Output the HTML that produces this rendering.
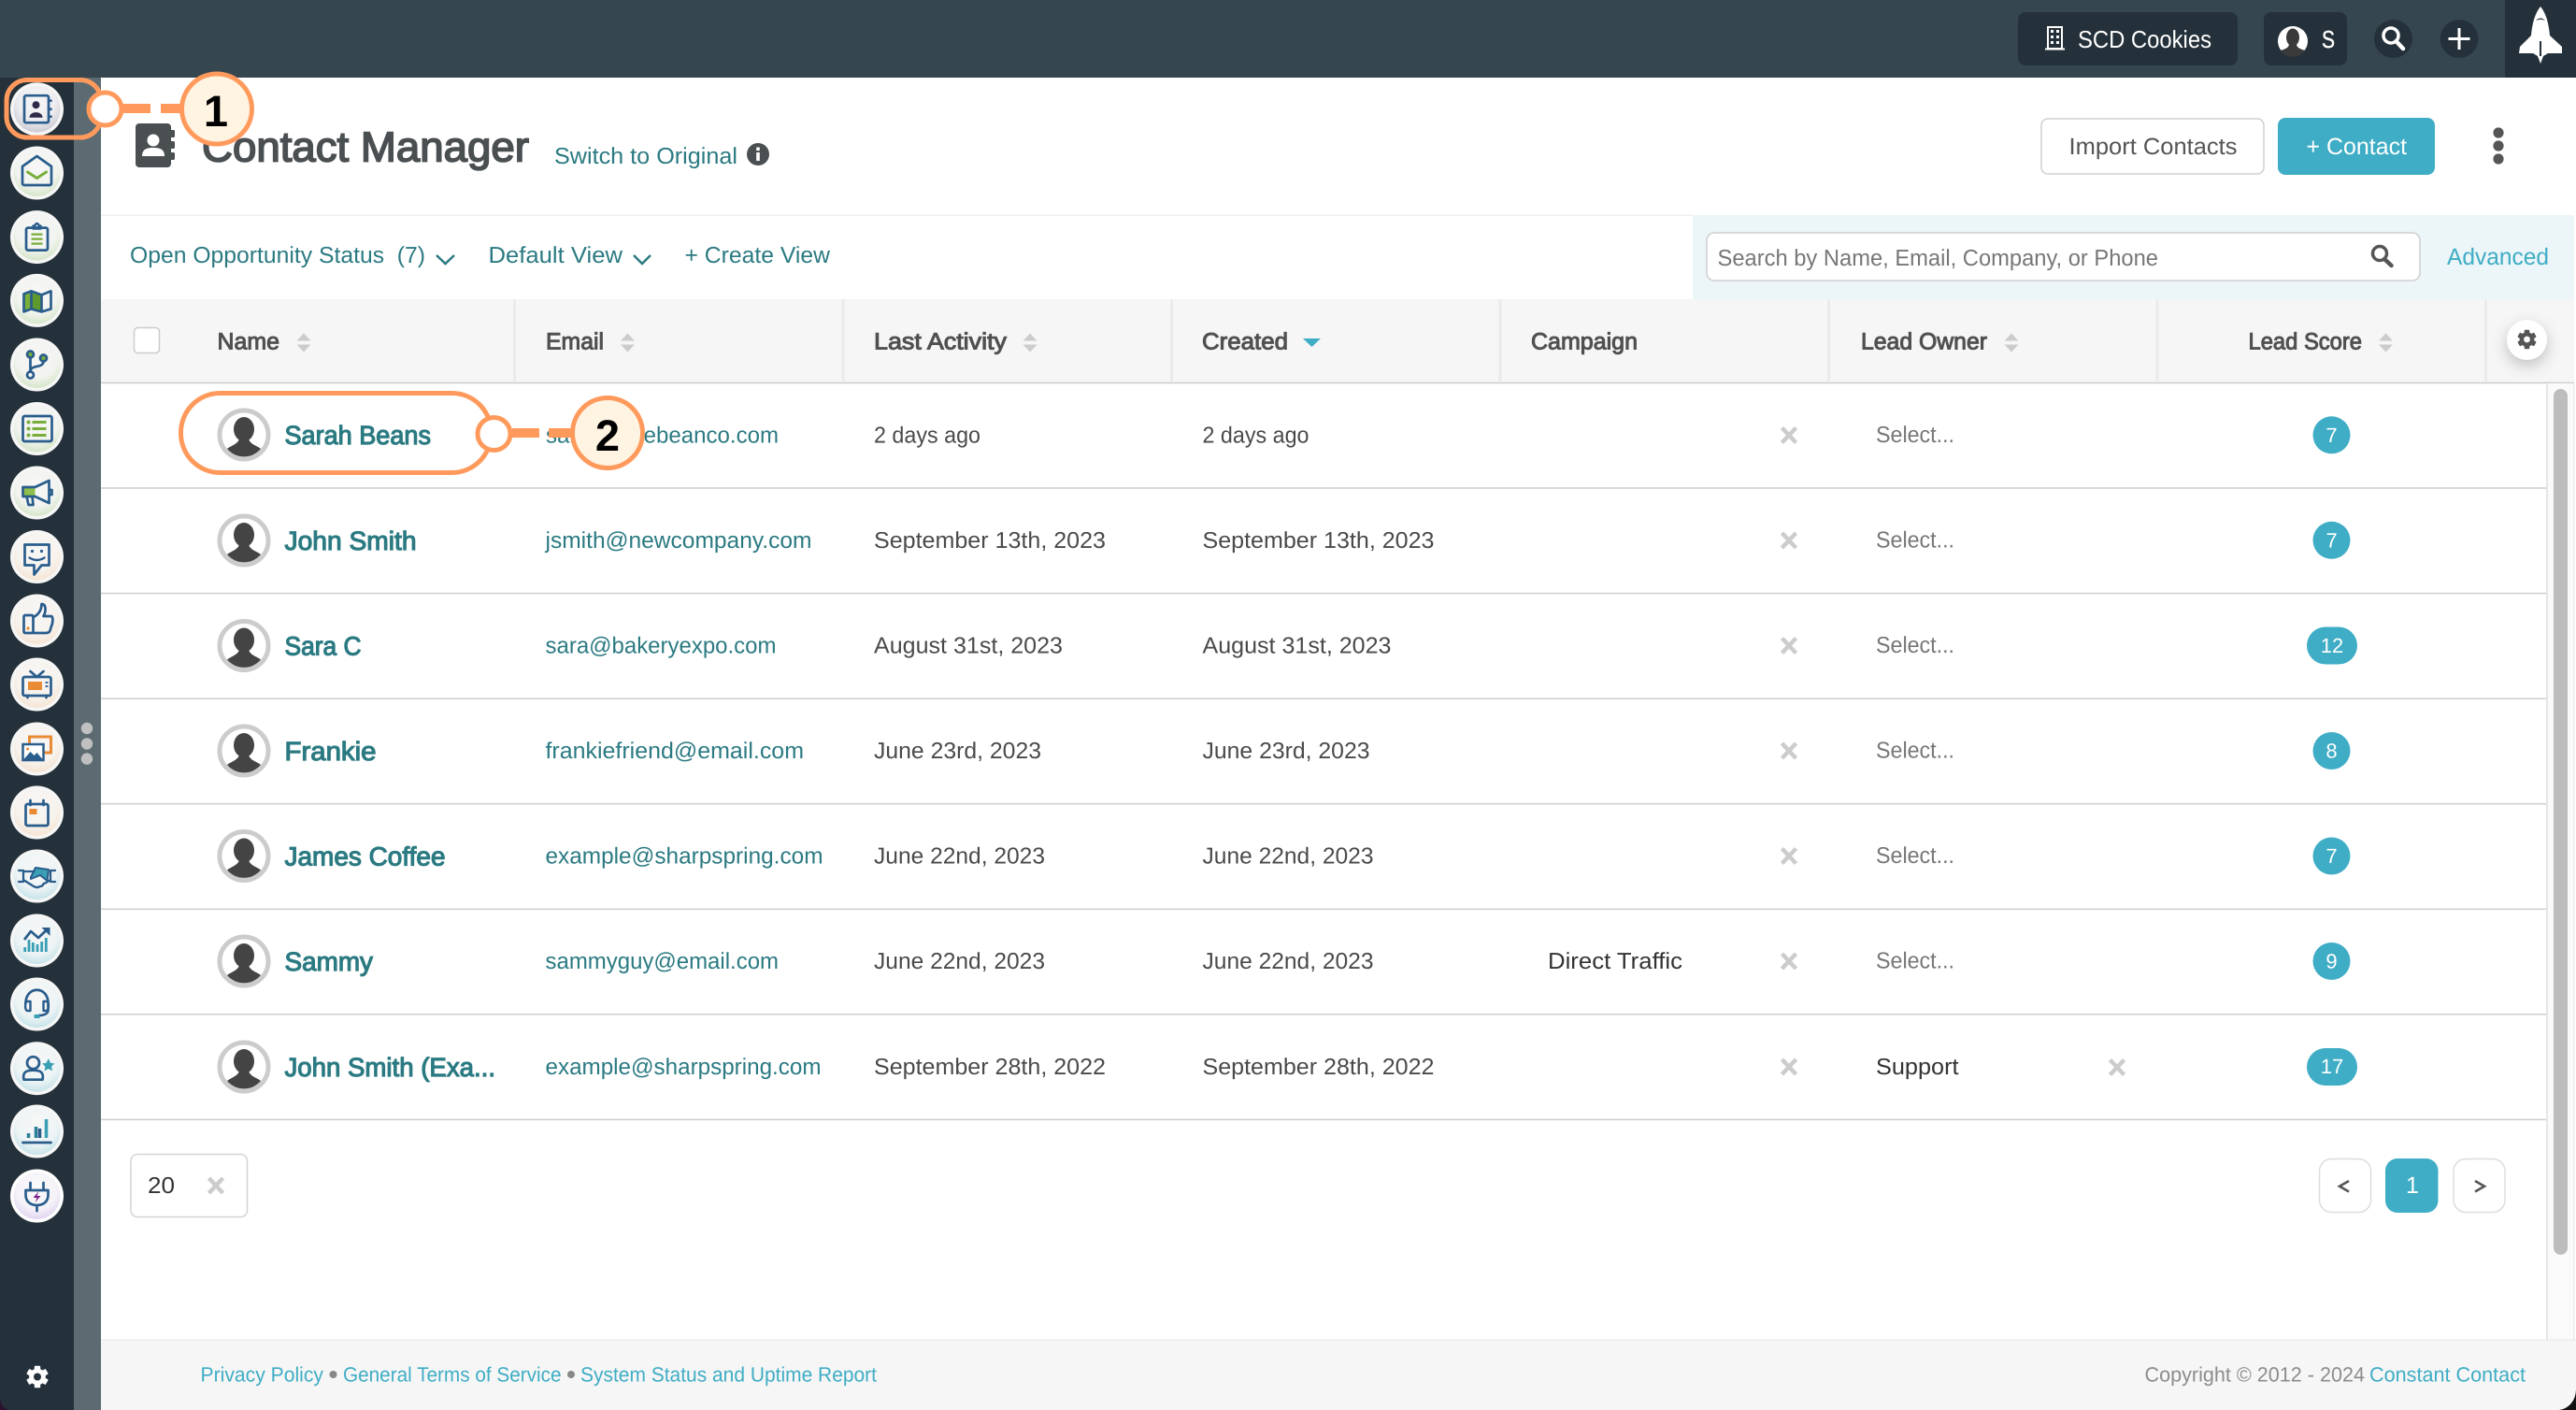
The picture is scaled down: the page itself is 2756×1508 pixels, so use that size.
<!DOCTYPE html>
<html lang="en"><head><meta charset="utf-8"><title>Contact Manager</title>
<style>
html,body{margin:0;padding:0;width:2756px;height:1508px;overflow:hidden;background:#fff}
svg{display:block;font-family:"Liberation Sans",sans-serif;text-rendering:geometricPrecision}
.nm{font-size:28px;fill:#2b7a82;stroke:#2b7a82;stroke-width:1.15px}
.em{font-size:24.5px;fill:#2b7a82}
.dt{font-size:24.5px;fill:#4a4a4a}
.se{font-size:24.5px;fill:#777}
.th{font-size:25px;fill:#505050;stroke:#505050;stroke-width:1px}
.tl{font-size:24.5px;fill:#2b7a82}
.ft{font-size:22px;fill:#3fadc5}
.bd{font-size:22px;fill:#fff;text-anchor:middle}
.b{fill:none;stroke:#2a5d8c;stroke-width:2.7;stroke-linejoin:round;stroke-linecap:round}
.g{fill:none;stroke:#79ad3a;stroke-width:3;stroke-linecap:round}
.o{fill:none;stroke:#e98a35;stroke-width:3;stroke-linecap:round}
.t{fill:none;stroke:#3a9fb5;stroke-width:3;stroke-linecap:butt}
</style></head><body>
<svg xmlns="http://www.w3.org/2000/svg" width="2756" height="1508" viewBox="0 0 2756 1508">
<defs>
<radialGradient id="dk" cx=".5" cy=".35" r=".72"><stop offset="0" stop-color="#f6f6f7"/><stop offset=".55" stop-color="#ededf0"/><stop offset="1" stop-color="#c4c2cc"/></radialGradient>
<radialGradient id="dg" cx=".5" cy=".35" r=".72"><stop offset="0" stop-color="#f7f7f7"/><stop offset=".6" stop-color="#f2f4f0"/><stop offset="1" stop-color="#cde2bd"/></radialGradient>
<radialGradient id="do" cx=".5" cy=".35" r=".72"><stop offset="0" stop-color="#f7f7f7"/><stop offset=".6" stop-color="#f7f3ee"/><stop offset="1" stop-color="#f5e0ca"/></radialGradient>
<radialGradient id="dt" cx=".5" cy=".35" r=".72"><stop offset="0" stop-color="#f7f7f7"/><stop offset=".6" stop-color="#eef4f5"/><stop offset="1" stop-color="#b9dee6"/></radialGradient>
<radialGradient id="dp" cx=".5" cy=".35" r=".72"><stop offset="0" stop-color="#fafafa"/><stop offset=".6" stop-color="#f5f2f8"/><stop offset="1" stop-color="#dccdf0"/></radialGradient>
<symbol id="av" overflow="visible" viewBox="-30 -30 60 60" width="60" height="60">
<circle r="26" fill="#fff" stroke="#ccc" stroke-width="5"/>
<ellipse cx="0" cy="-6" rx="11" ry="13" fill="#444"/>
<path d="M-5,3 C-5,10 -15,12 -18,15 A23.5 23.5 0 0 0 18,15 C15,12 5,10 5,3Z" fill="#444"/>
</symbol>
<symbol id="x" overflow="visible" viewBox="-12 -12 24 24" width="24" height="24">
<path d="M-7.5,-8 L7.5,8 M7.5,-8 L-7.5,8" stroke="#ccc" stroke-width="4.5" fill="none"/>
</symbol>
<symbol id="so" overflow="visible" viewBox="-10 -12 20 24" width="20" height="24">
<path d="M-7.5,-2 L0,-10 L7.5,-2Z M-7.5,2 L0,10 L7.5,2Z" fill="#ccc"/>
</symbol>
</defs>

<!-- background -->
<rect width="2756" height="1508" fill="#fff"/>
<rect width="2756" height="83" fill="#36464f"/>
<rect x="0" y="83" width="79" height="1425" fill="#25313a"/>
<rect x="79" y="83" width="29" height="1425" fill="#5c6b72"/>
<circle cx="93" cy="779" r="6.2" fill="#c0c0c0"/><circle cx="93" cy="795.5" r="6.2" fill="#c0c0c0"/><circle cx="93" cy="811.6" r="6.2" fill="#c0c0c0"/>

<!-- top bar -->
<rect x="2159" y="13" width="235" height="57" rx="8" fill="#25313a"/>
<g fill="none" stroke="#fff" stroke-width="2"><rect x="2191" y="29" width="15" height="23"/><path d="M2188,52.5H2209"/></g>
<g fill="#fff"><rect x="2194" y="32" width="3" height="3"/><rect x="2200" y="32" width="3" height="3"/><rect x="2194" y="38" width="3" height="3"/><rect x="2200" y="38" width="3" height="3"/><rect x="2194" y="44" width="3" height="3"/><rect x="2200" y="44" width="3" height="3"/></g>
<text x="2223" y="51" font-size="26" fill="#fff" textLength="143" lengthAdjust="spacingAndGlyphs">SCD Cookies</text>
<rect x="2422" y="13" width="89" height="57" rx="8" fill="#25313a"/>
<circle cx="2453" cy="44" r="16" fill="#fff"/>
<ellipse cx="2453" cy="40" rx="7" ry="9.5" fill="#3a3a3a"/>
<path d="M2449,47 C2449,52 2442,53 2440,54 A16 16 0 0 0 2466,54 C2464,53 2457,52 2457,47Z" fill="#3a3a3a"/>
<text x="2484" y="51" font-size="26" fill="#fff" stroke="#fff" stroke-width=".4" textLength="14" lengthAdjust="spacingAndGlyphs">S</text>
<circle cx="2560.5" cy="41.5" r="20.5" fill="#25313a"/>
<circle cx="2558" cy="38" r="8" fill="none" stroke="#fff" stroke-width="3.5"/>
<path d="M2563.5,44 L2571,52" stroke="#fff" stroke-width="4.5" stroke-linecap="round"/>
<circle cx="2631" cy="41.5" r="20.5" fill="#25313a"/>
<path d="M2619.5,41.5 H2642.5 M2631,30 V53" stroke="#fff" stroke-width="3" fill="none"/>
<rect x="2680" y="0" width="76" height="83" fill="#25313a"/>
<path d="M2718,7 C2712,14 2709,26 2708,38 L2696,50 L2695,57 L2710,57 L2715,60 L2718,68 L2721,60 L2726,57 L2741,57 L2741,50 L2728,38 C2727,26 2724,14 2718,7Z" fill="#fff"/>
<path d="M2713,22 Q2718,17 2723,22 Q2718,19.5 2713,22Z M2717,44 H2719 V60 H2717Z" fill="#25313a"/>

<!-- page header -->
<rect x="145" y="132" width="38" height="47" rx="4" fill="#4a4f52"/>
<rect x="182" y="139" width="5" height="8" rx="1.5" fill="#4a4f52"/><rect x="182" y="151" width="5" height="8" rx="1.5" fill="#4a4f52"/><rect x="182" y="163" width="5" height="8" rx="1.5" fill="#4a4f52"/>
<circle cx="164" cy="150" r="6.5" fill="#fff"/><path d="M152,167 C152,159 158,158 164,158 C170,158 176,159 176,167Z" fill="#fff"/>
<text x="216" y="172.5" font-size="45" fill="#4a4f52" stroke="#4a4f52" stroke-width="1.7" textLength="350" lengthAdjust="spacingAndGlyphs">Contact Manager</text>
<text x="593" y="175" class="tl" font-size="25" textLength="196" lengthAdjust="spacingAndGlyphs">Switch to Original</text>
<circle cx="811" cy="165" r="12" fill="#4a4f52"/><rect x="809.2" y="163" width="3.6" height="9" fill="#fff"/><rect x="809.2" y="157.5" width="3.6" height="3.6" fill="#fff"/>
<rect x="2184" y="127" width="238" height="59" rx="7" fill="#fff" stroke="#d2d2d2" stroke-width="1.6"/>
<text x="2213.5" y="165" font-size="25" fill="#555" textLength="180" lengthAdjust="spacingAndGlyphs">Import Contacts</text>
<rect x="2437" y="126" width="168" height="61" rx="8" fill="#3fadc5"/>
<text x="2467.5" y="165" font-size="25" fill="#fff" textLength="107.5" lengthAdjust="spacingAndGlyphs">+ Contact</text>
<circle cx="2673" cy="142" r="5.6" fill="#555"/><circle cx="2673" cy="156" r="5.6" fill="#555"/><circle cx="2673" cy="170" r="5.6" fill="#555"/>

<!-- toolbar -->
<rect x="108" y="229.5" width="1703" height="1.5" fill="#f0f0f0"/>
<rect x="1811" y="230" width="943" height="90" fill="#ecf5f8"/>
<text x="139" y="281" class="tl" textLength="316" lengthAdjust="spacingAndGlyphs" xml:space="preserve">Open Opportunity Status  (7)</text>
<path d="M467,273 L476.5,282 L486,273" fill="none" stroke="#2b7a82" stroke-width="2.5"/>
<text x="522.5" y="281" class="tl" textLength="143.5" lengthAdjust="spacingAndGlyphs">Default View</text>
<path d="M678,273 L687,282 L696,273" fill="none" stroke="#2b7a82" stroke-width="2.5"/>
<text x="732.5" y="281" class="tl" textLength="155.5" lengthAdjust="spacingAndGlyphs">+ Create View</text>
<rect x="1826" y="249" width="763" height="51" rx="8" fill="#fff" stroke="#d0d0d0" stroke-width="1.6"/>
<text x="1837.5" y="284" class="se" textLength="471.5" lengthAdjust="spacingAndGlyphs">Search by Name, Email, Company, or Phone</text>
<circle cx="2546" cy="271" r="7.5" fill="none" stroke="#555" stroke-width="3.5"/>
<path d="M2551,277 L2558.5,284" stroke="#555" stroke-width="4.5" stroke-linecap="round"/>
<text x="2618" y="283" font-size="25" fill="#3fadc5" textLength="109" lengthAdjust="spacingAndGlyphs">Advanced</text>

<!-- table header -->
<rect x="108" y="320" width="2646" height="89" fill="#f6f6f6"/>
<rect x="108" y="408.7" width="2646" height="1.6" fill="#cfcfcf"/>
<g fill="#ebebeb"><rect x="549" y="320" width="3" height="89"/><rect x="900.5" y="320" width="3" height="89"/><rect x="1252" y="320" width="3" height="89"/><rect x="1603.5" y="320" width="3" height="89"/><rect x="1955" y="320" width="3" height="89"/><rect x="2306.5" y="320" width="3" height="89"/><rect x="2658" y="320" width="3" height="89"/></g>
<rect x="143.5" y="350.5" width="27" height="27" rx="4" fill="#fff" stroke="#ccc" stroke-width="1.5"/>
<text x="232.5" y="373.5" class="th" textLength="66.5" lengthAdjust="spacingAndGlyphs">Name</text>
<use href="#so" x="315" y="354.5"/>
<text x="584" y="373.5" class="th" textLength="62" lengthAdjust="spacingAndGlyphs">Email</text>
<use href="#so" x="661.5" y="354.5"/>
<text x="935" y="373.5" class="th" textLength="142" lengthAdjust="spacingAndGlyphs">Last Activity</text>
<use href="#so" x="1092" y="354.5"/>
<text x="1286" y="373.5" class="th" textLength="92" lengthAdjust="spacingAndGlyphs">Created</text>
<path d="M1394,362 H1413 L1403.5,371Z" fill="#3fadc5"/>
<text x="1638" y="373.5" class="th" textLength="114" lengthAdjust="spacingAndGlyphs">Campaign</text>
<text x="1991" y="373.5" class="th" textLength="135" lengthAdjust="spacingAndGlyphs">Lead Owner</text>
<use href="#so" x="2142" y="354.5"/>
<text x="2405.5" y="373.5" class="th" textLength="121.5" lengthAdjust="spacingAndGlyphs">Lead Score</text>
<use href="#so" x="2542.5" y="354.5"/>
<g style="filter:drop-shadow(0 6px 8px rgba(0,0,0,.22))"><circle cx="2703.5" cy="363.5" r="21.5" fill="#fff"/></g>
<g transform="translate(2703.5,363)" fill="#555"><circle r="7.8"/><rect x="-2.8" y="-10.2" width="5.6" height="20.4" rx="1"/><rect x="-2.8" y="-10.2" width="5.6" height="20.4" rx="1" transform="rotate(60)"/><rect x="-2.8" y="-10.2" width="5.6" height="20.4" rx="1" transform="rotate(120)"/><circle r="3.4" fill="#fff"/></g>

<!-- scroll track -->
<rect x="2725" y="410" width="29" height="1023" fill="#fafafa"/>
<rect x="2724" y="410" width="2" height="1023" fill="#e6e6e6"/>
<rect x="2753" y="410" width="1.5" height="1023" fill="#ececec"/>
<rect x="2732" y="416" width="15" height="926" rx="7.5" fill="#bdbdbd"/>

<!-- row lines -->
<g fill="#d0d0d0"><rect x="108" y="521.2" width="2616" height="1.6"/><rect x="108" y="633.8" width="2616" height="1.6"/><rect x="108" y="746.4" width="2616" height="1.6"/><rect x="108" y="858.9" width="2616" height="1.6"/><rect x="108" y="971.5" width="2616" height="1.6"/><rect x="108" y="1084" width="2616" height="1.6"/><rect x="108" y="1196.6" width="2616" height="1.6"/></g>

<!-- row 1 -->
<use href="#av" x="231" y="435"/>
<text x="304.5" y="475" class="nm" textLength="156.5" lengthAdjust="spacingAndGlyphs">Sarah Beans</text>
<text x="584" y="473.5" class="em" textLength="249" lengthAdjust="spacingAndGlyphs">sarah@thebeanco.com</text>
<text x="935" y="473.5" class="dt" textLength="114" lengthAdjust="spacingAndGlyphs">2 days ago</text>
<text x="1286.5" y="473.5" class="dt" textLength="114" lengthAdjust="spacingAndGlyphs">2 days ago</text>
<use href="#x" x="1902" y="453.5"/>
<text x="2007" y="473" class="se" textLength="84" lengthAdjust="spacingAndGlyphs">Select...</text>
<circle cx="2494.5" cy="465.3" r="20" fill="#3fadc5"/><text x="2494.5" y="473" class="bd">7</text>

<!-- row 2 -->
<use href="#av" x="231" y="548"/>
<text x="304.5" y="588" class="nm" textLength="141" lengthAdjust="spacingAndGlyphs">John Smith</text>
<text x="583.5" y="586" class="em" textLength="285" lengthAdjust="spacingAndGlyphs">jsmith@newcompany.com</text>
<text x="935" y="586" class="dt" textLength="248" lengthAdjust="spacingAndGlyphs">September 13th, 2023</text>
<text x="1286.5" y="586" class="dt" textLength="248" lengthAdjust="spacingAndGlyphs">September 13th, 2023</text>
<use href="#x" x="1902" y="566"/>
<text x="2007" y="585.5" class="se" textLength="84" lengthAdjust="spacingAndGlyphs">Select...</text>
<circle cx="2494.5" cy="577.8" r="20" fill="#3fadc5"/><text x="2494.5" y="585.5" class="bd">7</text>

<!-- row 3 -->
<use href="#av" x="231" y="660.5"/>
<text x="304.5" y="700.5" class="nm" textLength="82" lengthAdjust="spacingAndGlyphs">Sara C</text>
<text x="583.5" y="698.5" class="em" textLength="247" lengthAdjust="spacingAndGlyphs">sara@bakeryexpo.com</text>
<text x="935" y="698.5" class="dt" textLength="202" lengthAdjust="spacingAndGlyphs">August 31st, 2023</text>
<text x="1286.5" y="698.5" class="dt" textLength="202" lengthAdjust="spacingAndGlyphs">August 31st, 2023</text>
<use href="#x" x="1902" y="678.5"/>
<text x="2007" y="698" class="se" textLength="84" lengthAdjust="spacingAndGlyphs">Select...</text>
<rect x="2468" y="670.5" width="54" height="40" rx="20" fill="#3fadc5"/><text x="2495" y="698" class="bd">12</text>

<!-- row 4 -->
<use href="#av" x="231" y="773"/>
<text x="304.5" y="813" class="nm" textLength="98" lengthAdjust="spacingAndGlyphs">Frankie</text>
<text x="583.5" y="811" class="em" textLength="276.5" lengthAdjust="spacingAndGlyphs">frankiefriend@email.com</text>
<text x="935" y="811" class="dt" textLength="179" lengthAdjust="spacingAndGlyphs">June 23rd, 2023</text>
<text x="1286.5" y="811" class="dt" textLength="179" lengthAdjust="spacingAndGlyphs">June 23rd, 2023</text>
<use href="#x" x="1902" y="791"/>
<text x="2007" y="810.5" class="se" textLength="84" lengthAdjust="spacingAndGlyphs">Select...</text>
<circle cx="2494.5" cy="803" r="20" fill="#3fadc5"/><text x="2494.5" y="810.7" class="bd">8</text>

<!-- row 5 -->
<use href="#av" x="231" y="885.5"/>
<text x="304.5" y="925.5" class="nm" textLength="172" lengthAdjust="spacingAndGlyphs">James Coffee</text>
<text x="583.5" y="923.5" class="em" textLength="297" lengthAdjust="spacingAndGlyphs">example@sharpspring.com</text>
<text x="935" y="923.5" class="dt" textLength="183" lengthAdjust="spacingAndGlyphs">June 22nd, 2023</text>
<text x="1286.5" y="923.5" class="dt" textLength="183" lengthAdjust="spacingAndGlyphs">June 22nd, 2023</text>
<use href="#x" x="1902" y="903.5"/>
<text x="2007" y="923" class="se" textLength="84" lengthAdjust="spacingAndGlyphs">Select...</text>
<circle cx="2494.5" cy="915.5" r="20" fill="#3fadc5"/><text x="2494.5" y="923.2" class="bd">7</text>

<!-- row 6 -->
<use href="#av" x="231" y="998"/>
<text x="304.5" y="1038" class="nm" textLength="94.5" lengthAdjust="spacingAndGlyphs">Sammy</text>
<text x="583.5" y="1036" class="em" textLength="249.5" lengthAdjust="spacingAndGlyphs">sammyguy@email.com</text>
<text x="935" y="1036" class="dt" textLength="183" lengthAdjust="spacingAndGlyphs">June 22nd, 2023</text>
<text x="1286.5" y="1036" class="dt" textLength="183" lengthAdjust="spacingAndGlyphs">June 22nd, 2023</text>
<text x="1656" y="1036" font-size="24.5" fill="#333" textLength="144" lengthAdjust="spacingAndGlyphs">Direct Traffic</text>
<use href="#x" x="1902" y="1016"/>
<text x="2007" y="1035.5" class="se" textLength="84" lengthAdjust="spacingAndGlyphs">Select...</text>
<circle cx="2494.5" cy="1028" r="20" fill="#3fadc5"/><text x="2494.5" y="1035.7" class="bd">9</text>

<!-- row 7 -->
<use href="#av" x="231" y="1111"/>
<text x="304.5" y="1151" class="nm" textLength="225.5" lengthAdjust="spacingAndGlyphs">John Smith (Exa...</text>
<text x="583.5" y="1149" class="em" textLength="295" lengthAdjust="spacingAndGlyphs">example@sharpspring.com</text>
<text x="935" y="1149" class="dt" textLength="248" lengthAdjust="spacingAndGlyphs">September 28th, 2022</text>
<text x="1286.5" y="1149" class="dt" textLength="248" lengthAdjust="spacingAndGlyphs">September 28th, 2022</text>
<use href="#x" x="1902" y="1129"/>
<text x="2007" y="1149" font-size="24.5" fill="#333" textLength="88.5" lengthAdjust="spacingAndGlyphs">Support</text>
<use href="#x" x="2253" y="1129.5"/>
<rect x="2468" y="1121" width="54" height="40" rx="20" fill="#3fadc5"/><text x="2495" y="1148" class="bd">17</text>

<!-- pagination -->
<rect x="140" y="1234.5" width="124.5" height="67" rx="7" fill="#fff" stroke="#d4d4d4" stroke-width="1.5"/>
<text x="158" y="1276" font-size="24.5" fill="#333" textLength="29" lengthAdjust="spacingAndGlyphs">20</text>
<use href="#x" x="219" y="1256"/>
<rect x="2481.5" y="1239.5" width="55" height="57" rx="13" fill="#fff" stroke="#ddd" stroke-width="1.5"/>
<path d="M2513,1263 L2503,1268.7 L2513,1274.5" fill="none" stroke="#555" stroke-width="2.6"/>
<rect x="2552" y="1239" width="56.5" height="58" rx="13" fill="#3fadc5"/>
<text x="2581" y="1276" font-size="25" fill="#fff" text-anchor="middle">1</text>
<rect x="2625" y="1239.5" width="55" height="57" rx="13" fill="#fff" stroke="#ddd" stroke-width="1.5"/>
<path d="M2648,1263 L2658,1268.7 L2648,1274.5" fill="none" stroke="#555" stroke-width="2.6"/>

<!-- footer -->
<rect x="108" y="1433" width="2648" height="75" fill="#f6f6f6"/>
<rect x="108" y="1432.5" width="2648" height="1.5" fill="#ececec"/>
<text x="214.5" y="1477.5" class="ft" textLength="131.5" lengthAdjust="spacingAndGlyphs">Privacy Policy</text>
<circle cx="356.5" cy="1470" r="4" fill="#888"/>
<text x="367" y="1477.5" class="ft" textLength="233.5" lengthAdjust="spacingAndGlyphs">General Terms of Service</text>
<circle cx="611" cy="1470" r="4" fill="#888"/>
<text x="621" y="1477.5" class="ft" textLength="317" lengthAdjust="spacingAndGlyphs">System Status and Uptime Report</text>
<text x="2294.5" y="1477.5" font-size="22" fill="#8c8c8c" textLength="235.5" lengthAdjust="spacingAndGlyphs">Copyright © 2012 - 2024</text>
<text x="2535" y="1477.5" class="ft" textLength="167" lengthAdjust="spacingAndGlyphs">Constant Contact</text>
<path d="M2756,1486 A20 22 0 0 1 2738,1508 H2756Z" fill="#111"/>
<path d="M0,1494 A12 14 0 0 0 14,1508 H0Z" fill="#2a1230"/>

<!-- sidebar icons -->
<g>
<circle cx="39.5" cy="116.7" r="28.5" fill="#f6f6f6"/><circle cx="39.5" cy="116.7" r="25" fill="url(#dk)"/>
<g transform="translate(39.5,116.7)"><rect x="-13.5" y="-14.5" width="26" height="29" rx="2" class="b"/><path d="M13,-9 h2 M13,0 h2 M13,8 h2" class="b"/><circle cx="-1" cy="-4.5" r="4" fill="#2e2a4a"/><path d="M-8,9 C-8,1.5 6,1.5 6,9Z" fill="#2e2a4a"/></g>

<circle cx="39.5" cy="185" r="28.5" fill="#f6f6f6"/><circle cx="39.5" cy="185" r="25" fill="url(#dg)"/>
<g transform="translate(39.5,185)"><path d="M-15.5,-7 L0,-18 L15.5,-7 V11 a2 2 0 0 1 -2 2 H-13.5 a2 2 0 0 1 -2 -2Z" class="b"/><path d="M-10,-1 L0,5.5 L10,-1" class="g"/></g>

<circle cx="39.5" cy="253.6" r="28.5" fill="#f6f6f6"/><circle cx="39.5" cy="253.6" r="25" fill="url(#dg)"/>
<g transform="translate(39.5,253.6)"><rect x="-11.5" y="-10" width="23" height="24" rx="2" class="b"/><path d="M-4,-10 V-12 H-2 A2 2.5 0 0 1 2,-12 H4 V-9 H-4Z" class="b" style="stroke-width:2.4"/><path d="M-6,-3 H6 M-6,2 H6 M-6,7 H6" class="g" style="stroke-width:2.2;stroke-linecap:butt"/></g>

<circle cx="39.5" cy="321.4" r="28.5" fill="#f6f6f6"/><circle cx="39.5" cy="321.4" r="25" fill="url(#dg)"/>
<g transform="translate(39.5,321.4)"><path d="M-14,-7 L-6,-10 V9 L-14,12Z" fill="#7ab03a"/><path d="M-6,-10 L5,-6 V12 L-6,9Z" fill="#5f9a2e"/><path d="M-14,-7 L-6,-10 L5,-6 L15,-10 V9 L5,12 L-6,9 L-14,12Z M-6,-10 V9 M5,-6 V12" class="b"/></g>

<circle cx="39.5" cy="390" r="28.5" fill="#f6f6f6"/><circle cx="39.5" cy="390" r="25" fill="url(#dg)"/>
<g transform="translate(39.5,390)"><circle cx="-7" cy="-11" r="3.5" class="b" style="fill:#79ad3a"/><circle cx="7" cy="-7" r="3.5" class="b" style="fill:#79ad3a"/><circle cx="-7" cy="11" r="3.5" class="b"/><path d="M-7,-7.5 V7.5 M7,-3.5 C7,4 -7,0 -7,7" class="b"/></g>

<circle cx="39.5" cy="458.5" r="28.5" fill="#f6f6f6"/><circle cx="39.5" cy="458.5" r="25" fill="url(#dg)"/>
<g transform="translate(39.5,458.5)"><rect x="-15" y="-13.5" width="31" height="27" rx="2" class="b"/><path d="M-5,-7 H10 M-5,0 H10 M-5,7 H10" class="g" style="stroke-linecap:butt"/><circle cx="-9" cy="-7" r="2" fill="#79ad3a"/><circle cx="-9" cy="0" r="2" fill="#79ad3a"/><circle cx="-9" cy="7" r="2" fill="#79ad3a"/></g>

<circle cx="39.5" cy="527" r="28.5" fill="#f6f6f6"/><circle cx="39.5" cy="527" r="25" fill="url(#dg)"/>
<g transform="translate(39.5,527)"><path d="M-15,-6 H-2 V4 H-15Z" fill="#8fbf4a"/><path d="M-15,-6 H-2 L13,-13 V11 L-2,4 H-15Z M-11,4 L-9,13 H-4 L-5,4 M13,-3 H16 V2 H13" class="b"/></g>

<circle cx="39.5" cy="595.5" r="28.5" fill="#f6f6f6"/><circle cx="39.5" cy="595.5" r="25" fill="url(#do)"/>
<g transform="translate(39.5,595.5)"><path d="M-13,-13 H13 V9 H5 L-3,19 V9 H-13Z" class="b"/><circle cx="-5" cy="-6" r="1.6" fill="#2a5d8c"/><circle cx="5" cy="-6" r="1.6" fill="#2a5d8c"/><path d="M-8,1 Q0,6 8,1" class="b" style="stroke-width:2.4"/></g>

<circle cx="39.5" cy="664" r="28.5" fill="#f6f6f6"/><circle cx="39.5" cy="664" r="25" fill="url(#do)"/>
<g transform="translate(39.5,664)"><rect x="-14" y="-6" width="10" height="19" rx="1.5" class="b"/><path d="M-4,-4 C1,-6 5,-11 5,-18 C10,-18 10,-10 7,-5 H15 C18,-5 17,3 15,7 C14,12 13,13 9,13 H-4" class="b"/><circle cx="-9.5" cy="8" r="1.6" fill="#e98a35"/></g>

<circle cx="39.5" cy="732" r="28.5" fill="#f6f6f6"/><circle cx="39.5" cy="732" r="25" fill="url(#do)"/>
<g transform="translate(39.5,732)"><rect x="-9.5" y="-3" width="15" height="9" fill="#e98a35"/><rect x="-15" y="-8" width="30" height="20" rx="2" class="b"/><path d="M-7,-14 L0,-8 L7,-14 M-10,12 V14 M10,12 V14" class="b"/><path d="M9,-2 h3 M9,2 h3" class="b" style="stroke-width:1.8;stroke-linecap:butt"/></g>

<circle cx="39.5" cy="801" r="28.5" fill="#f6f6f6"/><circle cx="39.5" cy="801" r="25" fill="url(#do)"/>
<g transform="translate(39.5,801)"><path d="M-8,-7 V-13 H15 V4 H7" class="o"/><rect x="-15" y="-5" width="22" height="17" fill="#fff" stroke="#2a5d8c" stroke-width="2.5"/><path d="M-14,11 L-7,3 L-3,7 L0,4 L6,11Z" fill="#2a5d8c"/><circle cx="-10" cy="0" r="1.5" fill="#e98a35"/></g>

<circle cx="39.5" cy="869" r="28.5" fill="#f6f6f6"/><circle cx="39.5" cy="869" r="25" fill="url(#do)"/>
<g transform="translate(39.5,869)"><rect x="-12" y="-9" width="24" height="23" rx="2" class="b"/><path d="M-7,-13 V-8 M7,-13 V-8" class="b"/><rect x="-8" y="-4" width="8" height="6" fill="#e98a35"/></g>

<circle cx="39.5" cy="937" r="28.5" fill="#f6f6f6"/><circle cx="39.5" cy="937" r="25" fill="url(#dt)"/>
<g transform="translate(39.5,937)"><path d="M-6.5,1 L-1.5,-9 L12.5,-7 L11,5 L3.5,-1 L-6.5,3Z" fill="#3a9fb5" stroke="#2a5d8c" stroke-width="2" stroke-linejoin="round"/><path d="M-19.5,-6 H-14.5 V6 H-19.5 M19.5,-6 H14.5 V6 H19.5 M-14.5,-5 H-3 M-14.5,4 L-5,10 C-2,12 1,13 3,11 C6,11 7,9 7,8 C9,8 11,6 14.5,4" class="b" style="stroke-width:2.3"/></g>

<circle cx="39.5" cy="1006" r="28.5" fill="#f6f6f6"/><circle cx="39.5" cy="1006" r="25" fill="url(#dt)"/>
<g transform="translate(39.5,1006)"><path d="M-13.5,-1 L-6.5,-10 L1.5,-3 L11,-12" class="b" style="stroke-linecap:butt"/><path d="M5,-14 H14 V-5Z" fill="#2a5d8c"/><path d="M-12.8,12 V7 M-8.5,12 V-1 M-4.2,12 V2 M.5,12 V4 M5.2,12 V1 M9.8,12 V-3" class="t" style="stroke-width:2.8"/></g>

<circle cx="39.5" cy="1074" r="28.5" fill="#f6f6f6"/><circle cx="39.5" cy="1074" r="25" fill="url(#dt)"/>
<g transform="translate(39.5,1074)"><path d="M-12,-1 C-12,-20 12,-20 12,-1 V6 C12,10 8,12 2,12" class="b"/><path d="M-12,-3 H-7 V7 H-10 C-12,7 -13,4 -12,-3Z M12,-3 H7 V7 H10 C12,7 13,4 12,-3Z" class="b" style="stroke-width:2.4"/><path d="M-3,13 H3" class="t" style="stroke-width:4"/></g>

<circle cx="39.5" cy="1142.7" r="28.5" fill="#f6f6f6"/><circle cx="39.5" cy="1142.7" r="25" fill="url(#dt)"/>
<g transform="translate(39.5,1142.7)"><circle cx="-4" cy="-6" r="6.5" class="b"/><path d="M-14,12 C-16,3 -10,2 -4,2 C2,2 8,3 6,12Z" class="b"/><path d="M15,-8 L17.5,-3 L22,-2.5 L18.5,1 L19.5,6 L15,3.5 L10.5,6 L11.5,1 L8,-2.5 L12.5,-3Z" fill="#3a9fb5" transform="translate(-2,-3) scale(.95)"/></g>

<circle cx="39.5" cy="1210" r="28.5" fill="#f6f6f6"/><circle cx="39.5" cy="1210" r="25" fill="url(#dt)"/>
<g transform="translate(39.5,1210)"><path d="M-15,12 H15" class="b"/><path d="M-9,7 V2 M-1,7 V-5" class="t" style="stroke:#2a7f96;stroke-width:3.5"/><path d="M3,7 V-3" style="stroke:#2a5d8c;stroke-width:3.5"/><path d="M10,7 V-13" class="t" style="stroke-width:3.5"/></g>

<circle cx="39.5" cy="1279" r="28.5" fill="#fff"/><circle cx="39.5" cy="1279" r="25" fill="url(#dp)"/>
<g transform="translate(39.5,1279)"><path d="M-12,-6 H12 V-1 C12,6 7,10 0,10 C-7,10 -12,6 -12,-1Z M-7,-14 V-7 M7,-14 V-7 M0,10 V16" class="b"/><path d="M2,-5 L-4,2 H0 L-2,7 L4,0 H0Z" fill="#7a1f8a"/></g>

<g transform="translate(40,1472.5)" fill="#fff"><circle r="8.8"/><rect x="-3.2" y="-11.8" width="6.4" height="23.6" rx="1"/><rect x="-3.2" y="-11.8" width="6.4" height="23.6" rx="1" transform="rotate(60)"/><rect x="-3.2" y="-11.8" width="6.4" height="23.6" rx="1" transform="rotate(120)"/><circle r="4" fill="#25313a"/></g>
</g>

<!-- callout 1 -->
<rect x="7" y="85.5" width="101" height="61.5" rx="22" fill="none" stroke="#ff9a5c" stroke-width="5"/>
<circle cx="112.5" cy="116.5" r="17.5" fill="#fff" stroke="#ff9a5c" stroke-width="5"/>
<rect x="132" y="111" width="29" height="10" fill="#ff9a5c"/><rect x="172" y="111" width="24" height="10" fill="#ff9a5c"/>
<circle cx="232" cy="116.5" r="37.5" fill="#fff3e2" stroke="#ff9a5c" stroke-width="5"/>
<text x="231" y="135" font-size="47" font-weight="700" fill="#000" text-anchor="middle">1</text>

<!-- callout 2 -->
<rect x="193.5" y="420.5" width="332" height="85" rx="42" fill="none" stroke="#ff9a5c" stroke-width="5"/>
<circle cx="528.5" cy="464" r="17.5" fill="#fff" stroke="#ff9a5c" stroke-width="5"/>
<rect x="548" y="458" width="29" height="10" fill="#ff9a5c"/><rect x="587" y="458" width="28" height="10" fill="#ff9a5c"/>
<circle cx="650" cy="463" r="37.5" fill="#fff3e2" stroke="#ff9a5c" stroke-width="5"/>
<text x="650" y="482" font-size="47" font-weight="700" fill="#000" text-anchor="middle">2</text>
</svg>
</body></html>
